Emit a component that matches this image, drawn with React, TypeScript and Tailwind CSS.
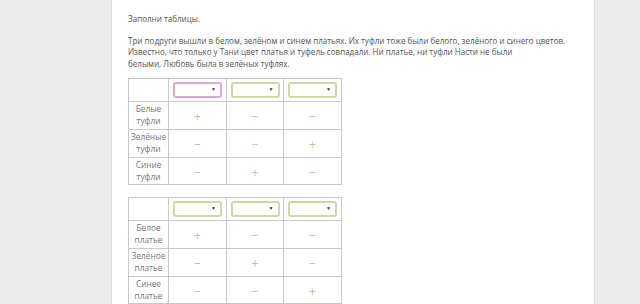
import React from "react";

const font = { fontFamily: '"Open Sans", "Liberation Sans", sans-serif' };

function Select({ pink }: { pink?: boolean }) {
  return (
    <div
      className={`mx-auto w-[49px] h-[16px] rounded-[3px] border-2 bg-white flex items-center justify-end pr-[4px] ${
        pink ? "border-[#dca9cf]" : "border-[#cad9a5]"
      }`}
    >
      <span className="text-[5px] leading-none text-[#333]">▼</span>
    </div>
  );
}

function Sign({ s }: { s: string }) {
  return (
    <span className="text-[12px] leading-none text-[#b2c98f]">
      {s}
    </span>
  );
}

function Table({
  rows,
  pinkFirst,
}: {
  rows: { label: [string, string]; vals: string[] }[];
  pinkFirst?: boolean;
}) {
  return (
    <table className="border-collapse w-[213px] table-fixed">
      <colgroup>
        <col className="w-[40px]" />
        <col className="w-[58px]" />
        <col className="w-[57px]" />
        <col className="w-[58px]" />
      </colgroup>
      <tbody>
        <tr className="h-[23px]">
          <td className="border border-[#c9c9c9]"></td>
          <td className="border border-[#c9c9c9] p-0">
            <Select pink={pinkFirst} />
          </td>
          <td className="border border-[#c9c9c9] p-0">
            <Select />
          </td>
          <td className="border border-[#c9c9c9] p-0">
            <Select />
          </td>
        </tr>
        {rows.map((r, i) => (
          <tr key={i} className={i === 2 ? "h-[27px]" : "h-[28px]"}>
            <td className="border border-[#c9c9c9] p-0 text-center text-[8.3px] leading-[12px] text-[#777]">
              {r.label[0]}
              <br />
              {r.label[1]}
            </td>
            {r.vals.map((v, j) => (
              <td key={j} className="border border-[#c9c9c9] p-0 text-center">
                <Sign s={v} />
              </td>
            ))}
          </tr>
        ))}
      </tbody>
    </table>
  );
}

export default function App() {
  return (
    <div className="w-[640px] h-[304px] bg-[#ebebeb] overflow-hidden" style={font}>
      <div className="ml-[111px] w-[484px] h-[304px] bg-white border-x border-[#dedede] pl-[16px] pt-[13px]">
        <div className="text-[8.05px] leading-[11.2px] text-[#555] whitespace-nowrap">
          <p>Заполни таблицы.</p>
          <p className="mt-[11px]">
            Три подруги вышли в белом, зелёном и синем платьях. Их туфли тоже были белого, зелёного и синего цветов.
            <br />
            Известно, что только у Тани цвет платья и туфель совпадали. Ни платье, ни туфли Насти не были
            <br />
            белыми, Любовь была в зелёных туфлях.
          </p>
        </div>
        <div className="mt-[9px]">
          <Table
            pinkFirst
            rows={[
              { label: ["Белые", "туфли"], vals: ["+", "−", "−"] },
              { label: ["Зелёные", "туфли"], vals: ["−", "−", "+"] },
              { label: ["Синие", "туфли"], vals: ["−", "+", "−"] },
            ]}
          />
        </div>
        <div className="mt-[12px]">
          <Table
            rows={[
              { label: ["Белое", "платье"], vals: ["+", "−", "−"] },
              { label: ["Зелёное", "платье"], vals: ["−", "+", "−"] },
              { label: ["Синее", "платье"], vals: ["−", "−", "+"] },
            ]}
          />
        </div>
      </div>
    </div>
  );
}
